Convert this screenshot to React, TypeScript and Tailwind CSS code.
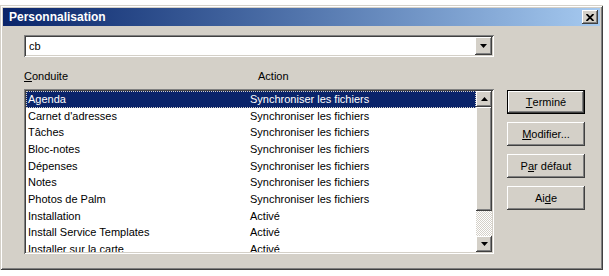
import React from 'react'

const rows: [string, string][] = [
  ['Agenda', 'Synchroniser les fichiers'],
  ["Carnet d'adresses", 'Synchroniser les fichiers'],
  ['Tâches', 'Synchroniser les fichiers'],
  ['Bloc-notes', 'Synchroniser les fichiers'],
  ['Dépenses', 'Synchroniser les fichiers'],
  ['Notes', 'Synchroniser les fichiers'],
  ['Photos de Palm', 'Synchroniser les fichiers'],
  ['Installation', 'Activé'],
  ['Install Service Templates', 'Activé'],
  ['Installer sur la carte', 'Activé'],
]

const raised =
  'bg-[#d4d0c8] shadow-[inset_-1px_-1px_#404040,inset_1px_1px_#ffffff,inset_-2px_-2px_#808080,inset_2px_2px_#d4d0c8]'
const sunken =
  'shadow-[inset_1px_1px_#808080,inset_-1px_-1px_#ffffff,inset_2px_2px_#404040,inset_-2px_-2px_#d4d0c8]'

const Arrow: React.FC<{ up?: boolean }> = ({ up }) => (
  <svg width="7" height="4" viewBox="0 0 7 4">
    {up ? <path d="M3.5 0 L7 4 L0 4 Z" fill="#000" /> : <path d="M0 0 L7 0 L3.5 4 Z" fill="#000" />}
  </svg>
)

const ArrowButton: React.FC<{ up?: boolean; className?: string }> = ({ up, className }) => (
  <div className={`${raised} flex items-center justify-center ${className ?? ''}`}>
    <Arrow up={up} />
  </div>
)

const Button: React.FC<{ children: React.ReactNode; isDefault?: boolean }> = ({ children, isDefault }) => (
  <div className={`w-[78px] h-[24px] ${isDefault ? 'border border-black' : ''}`}>
    <div className={`${raised} w-full h-full flex items-center justify-center text-[11px]`}>{children}</div>
  </div>
)

export default function App() {
  return (
    <div className="w-[609px] h-[276px] bg-white pt-[5px] font-['Liberation_Sans',Arial,sans-serif] text-[11px] text-black overflow-hidden">
      <div className="w-[603px] h-[265px] bg-[#d4d0c8] p-[3px] flex flex-col shadow-[inset_1px_1px_#d4d0c8,inset_-1px_-1px_#404040,inset_2px_2px_#ffffff,inset_-2px_-2px_#808080]">
        {/* title bar */}
        <div className="h-[18px] flex items-center justify-between bg-gradient-to-r from-[#0a246a] to-[#a6caf0] pl-[6px] pr-[2px]">
          <span className="font-bold text-[12px] text-white leading-none">Personnalisation</span>
          <div className={`${raised} w-[16px] h-[14px] flex items-center justify-center`}>
            <svg width="8" height="7" viewBox="0 0 8 7">
              <path d="M0.5 0 L7.5 7 M7.5 0 L0.5 7" stroke="#000" strokeWidth="1.8" />
            </svg>
          </div>
        </div>

        {/* body */}
        <div className="flex pl-[21px] pt-[9px]">
          <div className="w-[470px] flex flex-col">
            <div className={`h-[22px] bg-white ${sunken} flex items-center pl-[5px] pr-[2px]`}>
              <span className="flex-1">cb</span>
              <ArrowButton className="w-[17px] h-[18px]" />
            </div>

            <div className="mt-[13px] h-[13px] flex items-center">
              <span className="w-[234px]">
                <span className="underline">C</span>onduite
              </span>
              <span>Action</span>
            </div>

            <div className={`mt-[6px] h-[165px] bg-white ${sunken} p-[2px] flex`}>
              <div className="flex-1 overflow-hidden">
                {rows.map(([name, action], i) => (
                  <div
                    key={name}
                    className={`h-[16.67px] flex items-center pl-[2px] whitespace-nowrap ${
                      i === 0
                        ? 'bg-[#0a246a] text-white outline outline-1 outline-dotted outline-[#d4d0c8] -outline-offset-1'
                        : ''
                    }`}
                  >
                    <span className="w-[222px]">{name}</span>
                    <span>{action}</span>
                  </div>
                ))}
              </div>
              <div className="w-[16px] flex flex-col">
                <ArrowButton up className="h-[16px]" />
                <div className={`${raised} h-[104px]`} />
                <div className="flex-1 bg-[repeating-conic-gradient(#d4d0c8_0%_25%,#ffffff_0%_50%)] bg-[length:2px_2px]" />
                <ArrowButton className="h-[16px]" />
              </div>
            </div>
          </div>

          <div className="ml-[13px] mt-[55px] flex flex-col gap-[8px]">
            <Button isDefault>
              <span className="underline">T</span>erminé
            </Button>
            <Button>
              <span className="underline">M</span>odifier...
            </Button>
            <Button>
              P<span className="underline">a</span>r défaut
            </Button>
            <Button>
              Ai<span className="underline">d</span>e
            </Button>
          </div>
        </div>
      </div>
    </div>
  )
}
